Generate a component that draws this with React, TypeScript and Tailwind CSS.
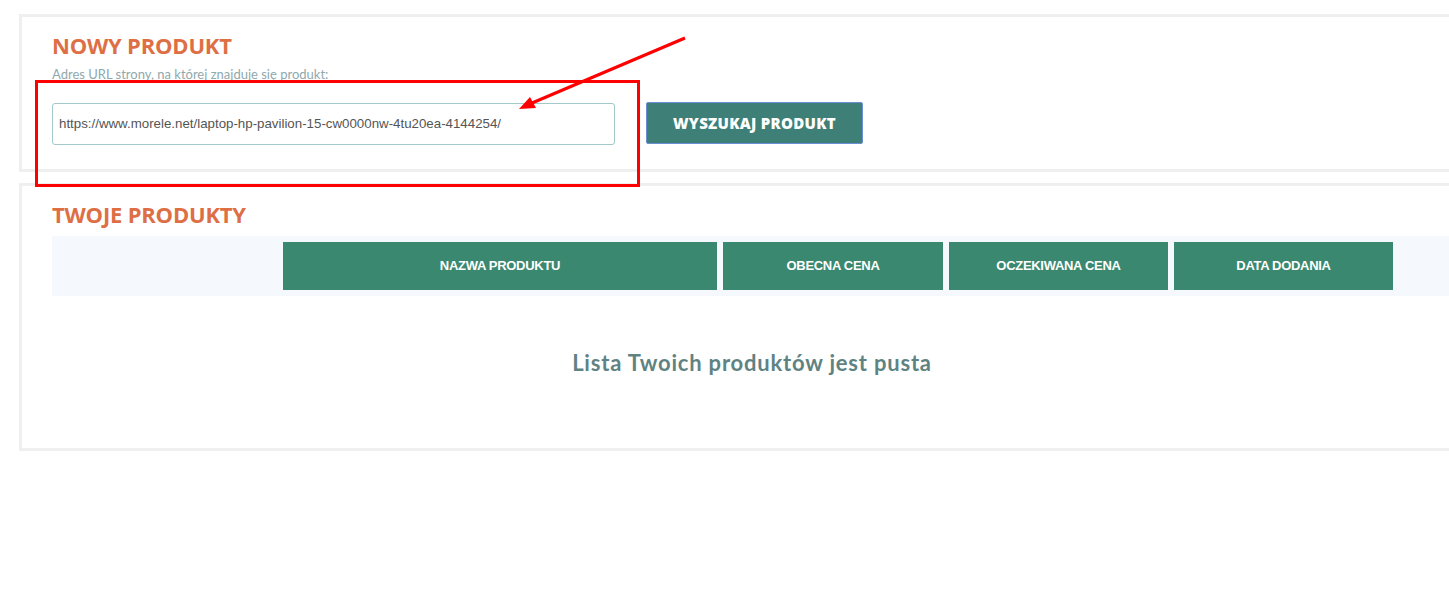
const heading = "text-[22px] font-bold uppercase text-[#de6f45] [font-family:'Open_Sans',sans-serif] tracking-[-0.2px] leading-[28px]";

const columns = [
  { label: "", w: "w-[219px]", empty: true },
  { label: "Nazwa produktu", w: "w-[434px]" },
  { label: "Obecna cena", w: "w-[220px]" },
  { label: "Oczekiwana cena", w: "w-[219px]" },
  { label: "Data dodania", w: "w-[219px]" },
  { label: "", w: "w-[47px]", empty: true },
];

export default function App() {
  return (
    <div className="relative h-[611px] w-[1449px] overflow-hidden bg-white">
      <div className="flex w-[1485px] flex-col gap-[11px] pl-[19px] pt-[14px]">
        {/* nowy produkt */}
        <section className="h-[158px] border-[3px] border-[#efefef] px-[30px] pt-[14px]">
          <h2 className={heading}>Nowy produkt</h2>
          <p className="mt-[7px] text-[13px] leading-[16px] text-[#8fa9ad] [font-family:Lato,sans-serif]">
            Adres URL strony, na której znajduje się produkt:
          </p>
          <div className="mt-[21px] flex items-center gap-[31px]">
            <div className="flex h-[42px] w-[563px] items-center rounded-[3px] border border-[#a2c9c7] px-[6px] text-[13.3px] text-[#555] [font-family:'Liberation_Sans',Arial,sans-serif]">
              https://www.morele.net/laptop-hp-pavilion-15-cw0000nw-4tu20ea-4144254/
            </div>
            <button className="-mt-[2px] h-[42px] w-[217px] rounded-[2px] border border-[#6a8fd6] bg-[#3e7f78] text-[15px] font-extrabold uppercase tracking-[0.3px] text-white [font-family:'Open_Sans',sans-serif]">
              Wyszukaj produkt
            </button>
          </div>
        </section>

        {/* twoje produkty */}
        <section className="h-[268px] border-[3px] border-[#efefef] px-[30px] pt-[14px]">
          <h2 className={heading}>Twoje produkty</h2>
          <div className="mt-[8px] flex gap-[6px] bg-[#f5f8fc] p-[6px]">
            {columns.map((c, i) => (
              <div
                key={i}
                className={`${c.w} flex h-[48px] shrink-0 items-center justify-center text-[13px] font-bold uppercase tracking-[-0.3px] text-white [font-family:'Liberation_Sans',Arial,sans-serif] ${c.empty ? "" : "bg-[#3a8870]"}`}
              >
                {c.label}
              </div>
            ))}
          </div>
          <p className="mt-[50px] text-center text-[22px] font-bold tracking-[0.8px] text-[#5f8383] [font-family:Lato,sans-serif]">
            Lista Twoich produktów jest pusta
          </p>
        </section>
      </div>

      {/* annotation */}
      <div className="absolute left-[35px] top-[80px] h-[107px] w-[605px] border-[3px] border-[#f00]" />
      <svg className="absolute left-0 top-0" width="1449" height="611">
        <line x1="685" y1="38" x2="532" y2="103" stroke="#f00" strokeWidth="3" />
        <polygon points="519,109 530,97 536,108" fill="#f00" />
      </svg>
    </div>
  );
}
